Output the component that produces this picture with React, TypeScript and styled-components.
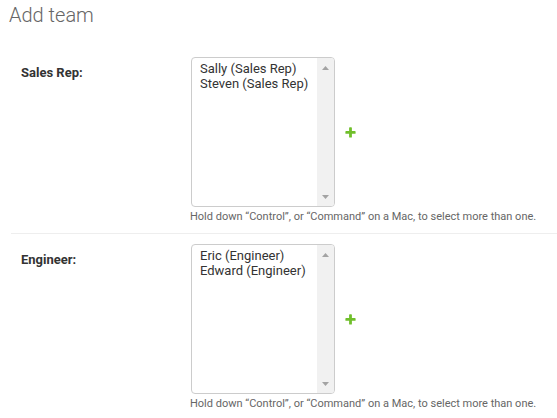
import * as React from 'react';
import styled, { createGlobalStyle } from 'styled-components';

const GlobalStyle = createGlobalStyle`
  html, body {
    margin: 0;
    padding: 0;
    background: #fff;
  }
  body {
    font-family: Roboto, "Liberation Sans", Arial, sans-serif;
    color: #333;
  }
`;

const Page = styled.div`
  padding: 3px 0 0 11px;
`;

const Title = styled.h1`
  margin: 0 0 20px -2px;
  font-size: 20px;
  line-height: 24px;
  font-weight: 300;
  color: #666;
`;

const Row = styled.div`
  padding: 10px;
  border-bottom: 1px solid #eee;
  font-size: 13px;
`;

const Field = styled.div`
  display: flex;
  align-items: flex-start;
`;

const Label = styled.label`
  width: 160px;
  flex: none;
  padding: 9px 10px 0 0;
  font-weight: bold;
  line-height: 13px;
  color: #333;
`;

const Wrapper = styled.div`
  display: flex;
  align-items: center;
`;

const ListBox = styled.div`
  display: flex;
  width: 144px;
  height: 150px;
  box-sizing: border-box;
  border: 1px solid #ccc;
  border-radius: 4px;
  overflow: hidden;
  background: #fff;
`;

const Options = styled.ul`
  flex: 1;
  margin: 0;
  padding: 3px 0 0 8px;
  list-style: none;
`;

const Option = styled.li`
  line-height: 15px;
  color: #333;
  white-space: nowrap;
`;

const ScrollTrack = styled.div`
  width: 17px;
  flex: none;
  background: #f1f1f1;
  display: flex;
  flex-direction: column;
  justify-content: space-between;
  align-items: center;
  padding: 8px 0 7px;
  box-sizing: border-box;
`;

const AddLink = styled.a`
  display: flex;
  margin-left: 9px;
  cursor: pointer;
`;

const Help = styled.div`
  margin-left: 169px;
  padding-top: 3px;
  font-size: 11px;
  line-height: 13px;
  color: #666;
`;

function Arrow({ down }: { down?: boolean }) {
  return (
    <svg width="7" height="4" viewBox="0 0 7 4">
      <path fill="#a3a3a3" d={down ? 'M0 0h7L3.5 4z' : 'M0 4h7L3.5 0z'} />
    </svg>
  );
}

function PlusIcon() {
  return (
    <svg width="13" height="13" viewBox="0 0 1792 1792">
      <path
        fill="#70bf2b"
        d="M1600 796v192q0 40-28 68t-68 28h-416v416q0 40-28 68t-68 28h-192q-40 0-68-28t-28-68v-416h-416q-40 0-68-28t-28-68v-192q0-40 28-68t68-28h416v-416q0-40 28-68t68-28h192q40 0 68 28t28 68v416h416q40 0 68 28t28 68z"
      />
    </svg>
  );
}

type TeamFieldProps = {
  label: string;
  options: string[];
};

function TeamField({ label, options }: TeamFieldProps) {
  return (
    <Row>
      <Field>
        <Label>{label}:</Label>
        <Wrapper>
          <ListBox>
            <Options>
              {options.map((o) => (
                <Option key={o}>{o}</Option>
              ))}
            </Options>
            <ScrollTrack>
              <Arrow />
              <Arrow down />
            </ScrollTrack>
          </ListBox>
          <AddLink title={`Add another ${label.toLowerCase()}`}>
            <PlusIcon />
          </AddLink>
        </Wrapper>
      </Field>
      <Help>Hold down “Control”, or “Command” on a Mac, to select more than one.</Help>
    </Row>
  );
}

export default function App() {
  return (
    <Page>
      <GlobalStyle />
      <Title>Add team</Title>
      <TeamField label="Sales Rep" options={['Sally (Sales Rep)', 'Steven (Sales Rep)']} />
      <TeamField label="Engineer" options={['Eric (Engineer)', 'Edward (Engineer)']} />
    </Page>
  );
}
